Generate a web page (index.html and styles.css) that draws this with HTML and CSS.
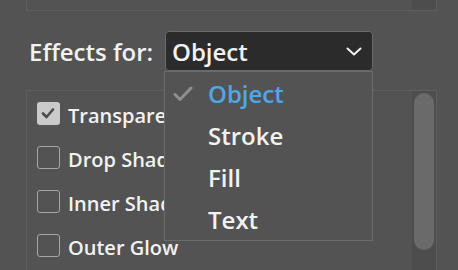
FILE: index.html
```html
<!DOCTYPE html>
<html lang="en">
<head>
    <meta charset="UTF-8">
    <meta name="viewport" content="width=device-width, initial-scale=1.0">
    <title>Effects</title>
    <link rel="stylesheet" href="styles.css">
</head>
<body>
    <div class="top-panel">
        <div class="track"></div>
    </div>

    <div class="effects-row">
        <span class="effects-label">Effects for:</span>
        <div class="select">
            <span>Object</span>
            <svg class="chevron" width="16" height="9" viewBox="0 0 16 9">
                <path d="M1.5 1.5 L8 7.5 L14.5 1.5" fill="none" stroke="#f2f2f2" stroke-width="2" stroke-linecap="round" stroke-linejoin="round"/>
            </svg>
        </div>
    </div>

    <div class="effects-list">
        <div class="rows">
            <div class="row">
                <span class="box checked">
                    <svg width="22" height="22" viewBox="0 0 22 22">
                        <path d="M6 11.5 L9.5 15 L16 7.5" fill="none" stroke="#4a4a4a" stroke-width="2.6" stroke-linecap="round" stroke-linejoin="round"/>
                    </svg>
                </span>
                <span class="row-label">Transparency</span>
            </div>
            <div class="row">
                <span class="box"></span>
                <span class="row-label">Drop Shadow</span>
            </div>
            <div class="row">
                <span class="box"></span>
                <span class="row-label">Inner Shadow</span>
            </div>
            <div class="row">
                <span class="box"></span>
                <span class="row-label">Outer Glow</span>
            </div>
        </div>
        <div class="track">
            <div class="thumb"></div>
        </div>
    </div>

    <!-- open dropdown menu -->
    <ul class="menu">
        <li class="selected">
            <svg class="tick" width="20" height="16" viewBox="0 0 20 16">
                <path d="M2 8.5 L7 13.5 L18 2" fill="none" stroke="#8e8e8e" stroke-width="3" stroke-linecap="round" stroke-linejoin="round"/>
            </svg>
            Object
        </li>
        <li>Stroke</li>
        <li>Fill</li>
        <li>Text</li>
    </ul>
</body>
</html>
```

FILE: styles.css
```css
body {
    margin: 0;
    background-color: #535353;
    font-family: "Open Sans", sans-serif;
    font-weight: 600;
    color: #f2f2f2;
    width: 458px;
    height: 270px;
    overflow: hidden;
    position: relative;
}

.top-panel {
    margin-left: 26px;
    width: 409px;
    height: 10px;
    border: 1px solid #5f5f5f;
    border-top: none;
    display: flex;
    justify-content: flex-end;
}

.track {
    width: 24px;
    background-color: #4d4d4d;
}

.effects-row {
    display: flex;
    align-items: center;
    margin-top: 20px;
    padding-left: 29px;
    height: 40px;
}

.effects-label {
    font-size: 24px;
    width: 136px;
}

.select {
    width: 208px;
    height: 40px;
    box-sizing: border-box;
    background-color: #2b2b2b;
    border: 1px solid #6a6a6a;
    border-radius: 4px;
    display: flex;
    align-items: center;
    justify-content: space-between;
    padding-left: 6px;
    padding-right: 10px;
    font-size: 24px;
}

.select span {
    flex: 1;
}

.effects-list {
    margin-top: 19px;
    margin-left: 26px;
    width: 409px;
    height: 190px;
    border: 1px solid #5f5f5f;
    border-bottom: none;
    display: flex;
}

.rows {
    flex: 1;
}

.row {
    height: 44px;
    display: flex;
    align-items: center;
    padding-left: 10px;
}

.box {
    width: 21px;
    height: 21px;
    border: 1px solid #a6a6a6;
    border-radius: 3px;
    margin-right: 8px;
}

.box.checked {
    width: 23px;
    height: 23px;
    border: none;
    background-color: #cacaca;
}

.row-label {
    font-size: 20px;
    margin-top: 4px;
}

.effects-list .track {
    padding-top: 2px;
    display: flex;
    justify-content: center;
}

.thumb {
    width: 20px;
    height: 157px;
    border-radius: 10px;
    background-color: #6a6a6a;
}

.menu {
    position: absolute;
    left: 164px;
    top: 71px;
    width: 207px;
    height: 167px;
    margin: 0;
    padding: 1px 0 0 0;
    list-style: none;
    background-color: #535353;
    border: 1px solid #6c6c6c;
    box-sizing: content-box;
}

.menu li {
    height: 42px;
    line-height: 42px;
    font-size: 24px;
    padding-left: 43px;
    position: relative;
}

.menu li.selected {
    color: #4fa7e6;
}

.tick {
    position: absolute;
    left: 8px;
    top: 13px;
}
```
